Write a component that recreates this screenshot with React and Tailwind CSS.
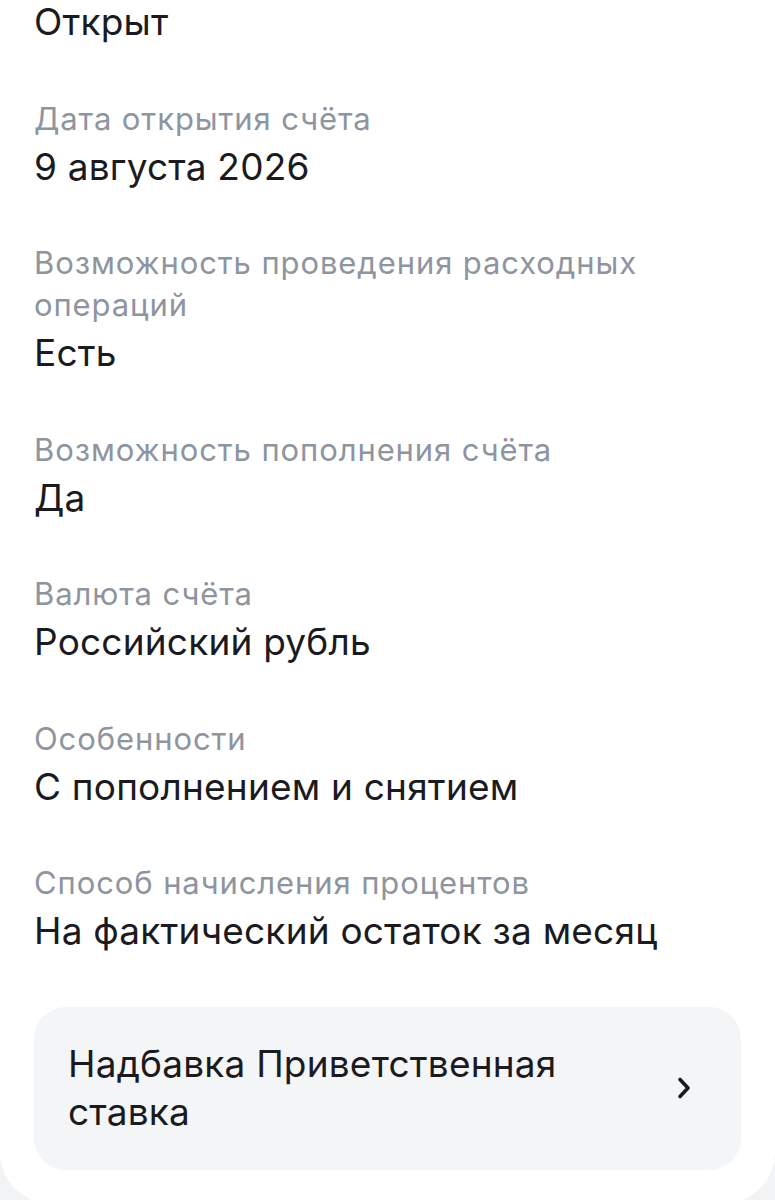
import React from 'react';

const rows = [
  { label: 'Дата открытия счёта', value: '9 августа 2026' },
  { label: 'Возможность проведения расходных операций', value: 'Есть' },
  { label: 'Возможность пополнения счёта', value: 'Да' },
  { label: 'Валюта счёта', value: 'Российский рубль' },
  { label: 'Особенности', value: 'С пополнением и снятием' },
  { label: 'Способ начисления процентов', value: 'На фактический остаток за месяц' },
];

function Row({ label, value }) {
  return (
    <div className="flex flex-col">
      <div className="text-[31px] leading-[42px] tracking-[0.9px] text-[#8e959e] pr-[100px]">{label}</div>
      <div className="text-[37px] leading-[54px] tracking-[0.2px] text-[#1b1b1f]">{value}</div>
    </div>
  );
}

export default function App() {
  return (
    <div className="min-h-[1200px] bg-[#f2f3f5] font-['Inter',sans-serif]">
      <div className="bg-white rounded-b-[52px] px-[34px] pb-[34px] overflow-hidden">
        <div className="flex flex-col gap-[48.5px] -mt-[5px]">
          <div className="text-[37px] leading-[54px] tracking-[0.2px] text-[#1b1b1f]">Открыт</div>
          {rows.map((r) => (
            <Row key={r.label} {...r} />
          ))}
          <div className="flex items-center justify-between bg-[#f4f5f7] rounded-[32px] pl-[34px] pr-[50px] pt-[33px] pb-[34px]">
            <div className="text-[37px] leading-[48px] tracking-[0.2px] text-[#1b1b1f] max-w-[540px]">
              Надбавка Приветственная ставка
            </div>
            <svg width="14" height="24" viewBox="0 0 14 24" fill="none">
              <path d="M3 3.5l8 8.5-8 8.5" stroke="#1b1b1f" strokeWidth="3.6" strokeLinecap="round" strokeLinejoin="round" />
            </svg>
          </div>
        </div>
      </div>
    </div>
  );
}
